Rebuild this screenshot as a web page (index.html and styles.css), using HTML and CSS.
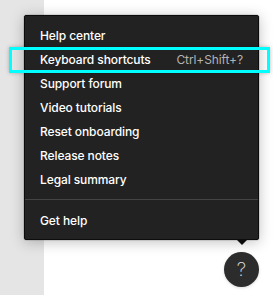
FILE: index.html
```html
<!DOCTYPE html>
<html>
    <head>
        <title>Help menu</title>
        <link rel="stylesheet" href="styles.css">
    </head>
    <body>
        <div class="sidebar"></div>
        <div class="canvas"></div>

        <div class="help-menu">
            <ul class="menu-list">
                <li class="menu-item">Help center</li>
                <li class="menu-item">Keyboard shortcuts <span class="shortcut">Ctrl+Shift+?</span></li>
                <li class="menu-item">Support forum</li>
                <li class="menu-item">Video tutorials</li>
                <li class="menu-item">Reset onboarding</li>
                <li class="menu-item">Release notes</li>
                <li class="menu-item">Legal summary</li>
            </ul>
            <div class="menu-sep"></div>
            <ul class="menu-list">
                <li class="menu-item">Get help</li>
            </ul>
            <div class="menu-arrow"></div>
        </div>

        <div class="highlight"></div>

        <button class="help-button">?</button>
    </body>
</html>
```

FILE: styles.css
```css
* {
    box-sizing: border-box;
    margin: 0;
    padding: 0;
}

body {
    display: flex;
    height: 100vh;
    overflow: hidden;
    background: #ffffff;
    font-family: Inter, "Noto Sans", sans-serif;
}

.sidebar {
    width: 44px;
    background: #e5e5e5;
}

.canvas {
    flex: 1;
    background: #ffffff;
}

.help-menu {
    position: absolute;
    left: 24px;
    top: 15px;
    width: 235px;
    padding: 7px 0;
    background: #222222;
    border: 1px solid #0c0c0c;
    border-radius: 2px;
    box-shadow: 0 2px 14px rgba(0,0,0,0.25), 0 0 0 0.5px rgba(0,0,0,0.2);
}

.menu-list {
    list-style: none;
}

.menu-item {
    display: flex;
    align-items: center;
    justify-content: space-between;
    height: 24px;
    padding: 0 15px;
    color: #ffffff;
    font-size: 12px;
    font-weight: 500;
    letter-spacing: -0.1px;
}

.shortcut {
    color: #b3b3b3;
    font-weight: 400;
}

.menu-sep {
    height: 1px;
    margin: 8px 0;
    background: #444444;
}

.menu-arrow {
    position: absolute;
    left: 212px;
    bottom: -6px;
    width: 0;
    height: 0;
    border-left: 5px solid transparent;
    border-right: 5px solid transparent;
    border-top: 5px solid #0c0c0c;
}

.highlight {
    position: absolute;
    left: 9px;
    top: 47px;
    width: 261px;
    height: 26px;
    border: 3px solid #00ffff;
    box-shadow: 0 0 4px rgba(0,0,0,0.25);
}

.help-button {
    position: absolute;
    left: 224px;
    top: 252px;
    width: 35px;
    height: 35px;
    border: none;
    border-radius: 50%;
    background: #2c2c2c;
    color: #e0e0e0;
    font-family: Inter, "Noto Sans", sans-serif;
    font-weight: 200;
    font-size: 19px;
    box-shadow: 0 1px 3px rgba(0,0,0,0.15);
}
```
